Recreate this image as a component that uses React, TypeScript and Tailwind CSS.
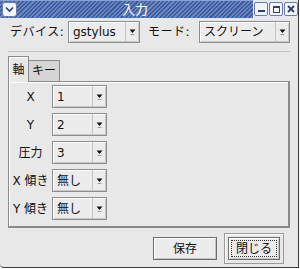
const font = "font-['DejaVu_Sans','Noto_Sans_CJK_JP',sans-serif]";

function Arrow() {
  return (
    <svg width="7" height="8" viewBox="0 0 7 8" className="block">
      <path d="M0.5 1.5 L6.5 1.5 L3.5 5 Z" fill="#111" />
      <rect x="1.5" y="6" width="4" height="1" fill="#9a9a9a" />
    </svg>
  );
}

function Combo({ value, w, sep, h = 22 }: { value: string; w: number; sep: number; h?: number }) {
  return (
    <div
      className="flex border border-[#8e8e8e] bg-[#ececec] shadow-[inset_1px_1px_0_#fff,inset_-1px_-1px_0_#c8c8c8]"
      style={{ width: w, height: h }}
    >
      <div className="flex items-center pl-[4px] text-[12px] text-[#111]" style={{ width: sep }}>
        {value}
      </div>
      <div className="flex flex-1 items-center justify-center border-l border-[#c4c4c4]">
        <Arrow />
      </div>
    </div>
  );
}

function Btn({ children }: { children: React.ReactNode }) {
  return (
    <div className="flex h-[23px] w-[64px] items-center justify-center border border-[#6e6e6e] bg-[#ececec] text-[12px] text-[#111] shadow-[inset_1px_1px_0_#fff,inset_-1px_-1px_0_#c4c4c4]">
      {children}
    </div>
  );
}

const rows = [
  { label: "X", value: "1" },
  { label: "Y", value: "2" },
  { label: "圧力", value: "3" },
  { label: "X 傾き", value: "無し" },
  { label: "Y 傾き", value: "無し" },
];

export default function App() {
  return (
    <div className={`relative h-[269px] w-[300px] overflow-hidden bg-white ${font}`}>
      <div className="h-[268px] w-[299px] rounded-bl-[4px] border-b border-r border-[#3a3a3a] bg-[#e8e8e8]">
        {/* title bar */}
        <div className="flex h-[18px] items-center bg-[#e6e9f0]">
          <div className="flex h-[18px] w-[254px] items-center bg-[repeating-linear-gradient(135deg,#6a86c2_0px,#6a86c2_1.5px,#3f5c9c_1.5px,#3f5c9c_3px)] shadow-[inset_0_1px_0_#8aa2d6]">
            <div className="ml-[2px] flex h-[15px] w-[15px] items-center justify-center rounded-[3px] border border-[#6b7ca8] bg-[#f4f6fb]">
              <svg width="9" height="7" viewBox="0 0 9 7">
                <path d="M1 1.5 L4.5 5 L8 1.5" stroke="#2c3f74" strokeWidth="1.6" fill="none" />
              </svg>
            </div>
            <div className="flex-1 text-center text-[13px] leading-none text-white">入力</div>
          </div>
          <div className="ml-[1px] flex gap-[1px]">
            <div className="flex h-[14px] w-[14px] items-center justify-center rounded-[2px] border border-[#6b7ca8] bg-[#f2f4f9]">
              <div className="mt-[4px] h-[2px] w-[7px] bg-[#2c3f74]" />
            </div>
            <div className="flex h-[14px] w-[14px] items-center justify-center rounded-[2px] border border-[#6b7ca8] bg-[#f2f4f9]">
              <div className="h-[7px] w-[7px] border border-t-2 border-[#2c3f74]" />
            </div>
            <div className="flex h-[14px] w-[14px] items-center justify-center rounded-[2px] border border-[#6b7ca8] bg-[#f2f4f9]">
              <svg width="8" height="8" viewBox="0 0 8 8">
                <path d="M1 1 L7 7 M7 1 L1 7" stroke="#2c3f74" strokeWidth="1.8" />
              </svg>
            </div>
          </div>
        </div>

        {/* device / mode row */}
        <div className="mt-[3px] flex h-[22px] items-center text-[12px] text-[#111]">
          <div className="ml-[10px] w-[58px] tracking-[0.5px]">デバイス:</div>
          <Combo value="gstylus" w={72} sep={56} />
          <div className="ml-[8px] w-[51px] tracking-[0.5px]">モード:</div>
          <Combo value="スクリーン" w={91} sep={75} />
        </div>

        {/* separator */}
        <div className="mx-[8px] mt-[8px] h-[2px] border-t border-[#c6c6c6] border-b-white" />

        {/* tabs */}
        <div className="mx-[8px] mt-[3px] flex items-end">
          <div className="relative z-10 -mb-[1px] flex h-[26px] w-[21px] items-center justify-center border border-b-0 border-[#8a8a8a] bg-[#e8e8e8] text-[12px] text-[#111] shadow-[inset_1px_1px_0_#fff]">
            軸
          </div>
          <div className="flex h-[21px] w-[31px] items-center justify-center border border-b-0 border-l-0 border-[#8a8a8a] bg-[#d6d6d6] text-[12px] text-[#111]">
            キー
          </div>
        </div>

        {/* panel */}
        <div className="mx-[8px] h-[147px] border border-[#8a8a8a] border-b-2 border-r-2 shadow-[inset_1px_1px_0_#fff]">
          <div className="mt-[3px] flex flex-col gap-[5px]">
            {rows.map((r) => (
              <div key={r.label} className="flex items-center">
                <div className="w-[43px] text-center text-[12px] text-[#111]">{r.label}</div>
                <Combo value={r.value} w={55} sep={39} h={23} />
              </div>
            ))}
          </div>
        </div>

        {/* buttons */}
        <div className="mt-[5px] flex items-center">
          <div className="ml-[153px]">
            <Btn>保存</Btn>
          </div>
          <div className="ml-[7px] flex h-[31px] w-[60px] items-center justify-center border border-[#9a9a9a] shadow-[inset_1px_1px_0_#fff]">
            <div className="flex h-[23px] w-[52px] items-center justify-center border border-[#6e6e6e] bg-[#ececec] shadow-[inset_1px_1px_0_#fff,inset_-1px_-1px_0_#c4c4c4]">
              <div className="flex h-[17px] w-[46px] items-center justify-center border border-dotted border-[#333] text-[12px] text-[#111]">
                閉じる
              </div>
            </div>
          </div>
        </div>
      </div>
    </div>
  );
}
